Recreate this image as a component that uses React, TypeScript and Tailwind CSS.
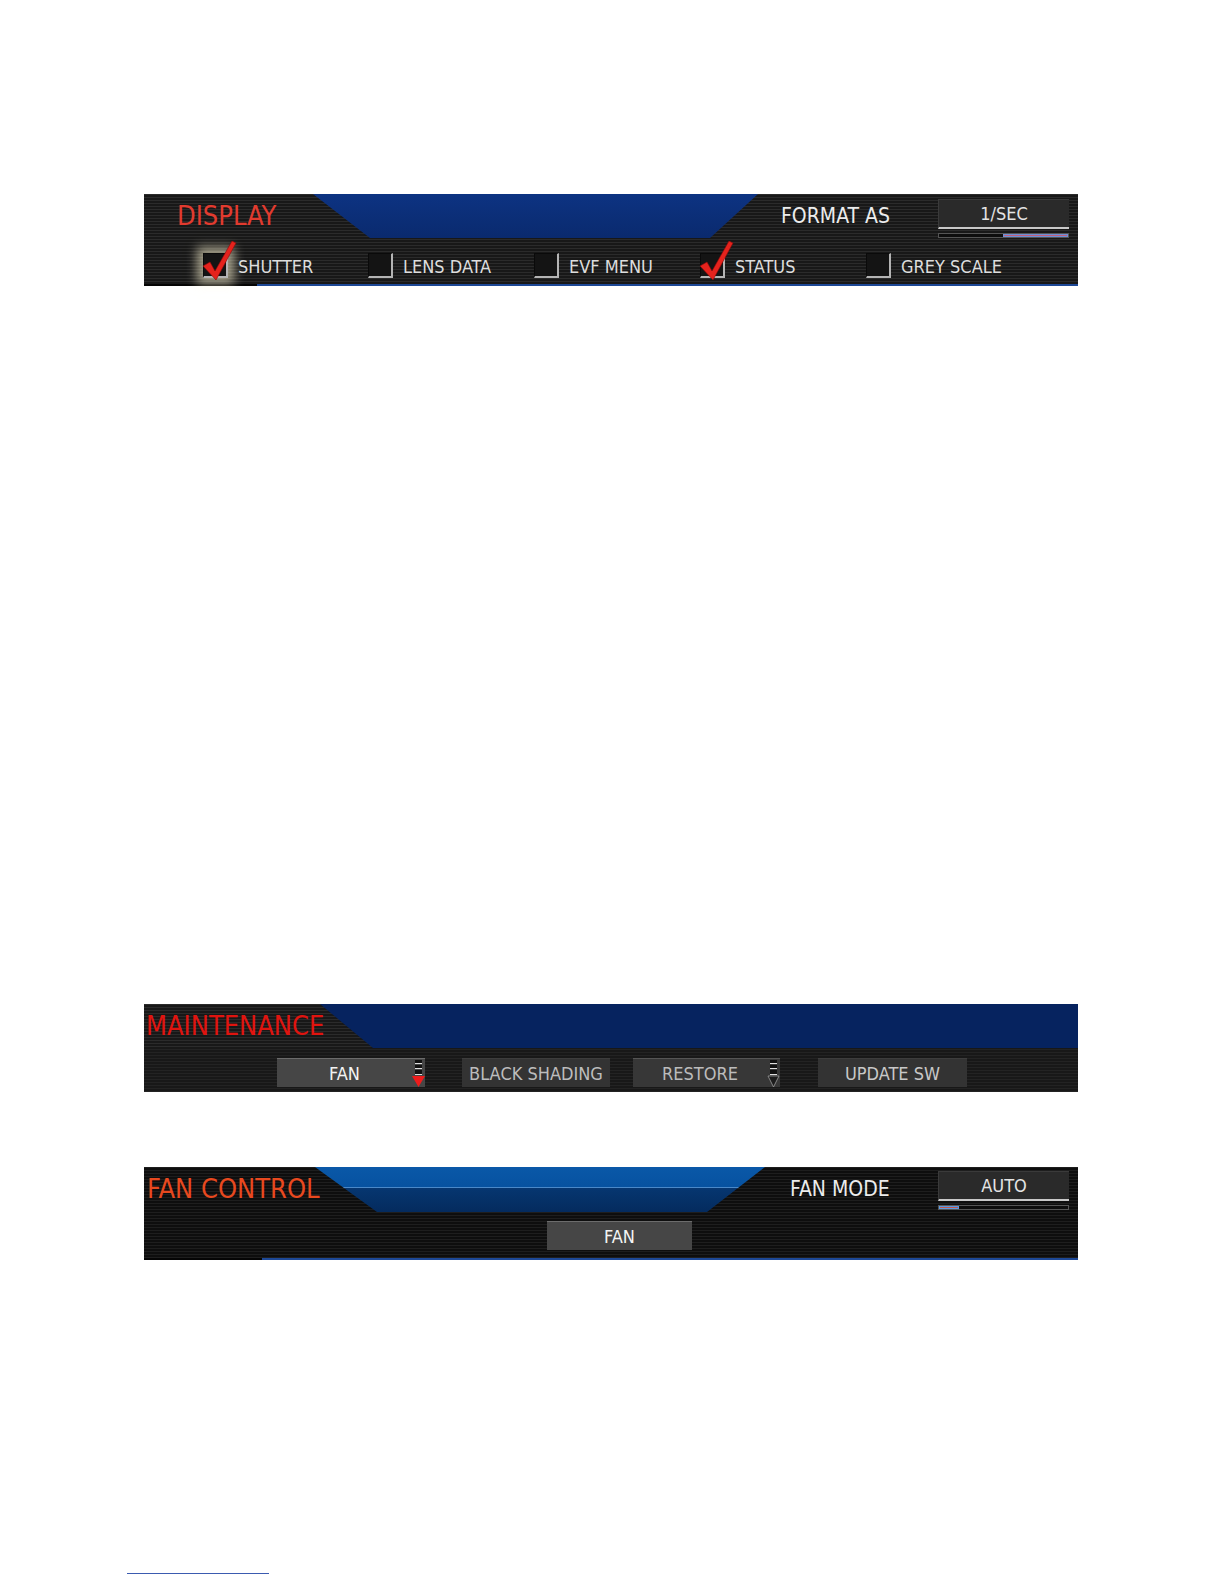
import React from 'react';

const font = 'font-["DejaVu_Sans_Condensed","DejaVu_Sans",sans-serif]';
const stripes = 'bg-[repeating-linear-gradient(180deg,#2b2b2b_0px,#2b2b2b_1px,#181818_1px,#181818_3px)]';
const darkStripes = 'bg-[repeating-linear-gradient(180deg,#1e1e1e_0px,#1e1e1e_1px,#0e0e0e_1px,#0e0e0e_3px)]';

const CheckMark = () => (
    <svg className="absolute -left-[3px] -top-[13px] w-[36px] h-[40px]" viewBox="0 0 36 40">
        <path d="M2 25 L9 21 L14 30 L31 0 L35 2 L15 39 Z" fill="#e5231d" stroke="#8c0a0a" strokeWidth="0.6" />
    </svg>
);

const CheckItem = ({ label, checked, glow }: { label: string; checked?: boolean; glow?: boolean }) => (
    <div className="flex items-center gap-[10px]">
        <div
            className={`relative w-[25px] h-[25px] bg-[#141414] border-t border-l border-[#0a0a0a] border-r-2 border-b-2 border-r-[#b4b4b4] border-b-[#b4b4b4] ${
                glow ? 'shadow-[0_0_10px_6px_rgba(255,246,210,0.6)]' : ''
            }`}
        >
            {checked && <CheckMark />}
        </div>
        <span className="text-[18px] text-[#dedede] leading-none pt-[2px]">{label}</span>
    </div>
);

const ValueBox = ({ value, segment }: { value: string; segment: 'right' | 'left' }) => (
    <div className="flex flex-col">
        <div className="h-[30px] flex items-center justify-center bg-[#2a2a2a] border-t border-l border-[#3a3a3a] border-b-2 border-b-[#c8c8c8] text-[18px] text-[#e4e4e4]">
            {value}
        </div>
        <div className="mt-[4px] h-[5px] flex border border-[#555] bg-[#0d0d0d]">
            {segment === 'right' ? (
                <div className="ml-[64px] flex-1 bg-[#c2607c] border border-[#6f8fd6]" />
            ) : (
                <div className="w-[20px] bg-[#c4584e] border border-[#5b9ae0]" />
            )}
        </div>
    </div>
);

const Indicator = ({ red }: { red?: boolean }) => (
    <svg className="w-[13px] h-[29px] shrink-0" viewBox="0 0 13 29">
        <rect x="3" y="1" width="7" height="3" fill="#111" />
        <rect x="3" y="4" width="7" height="1" fill="#ddd" />
        <rect x="3" y="6" width="7" height="3" fill="#111" />
        <rect x="3" y="9" width="7" height="1" fill="#ddd" />
        <rect x="3" y="11" width="7" height="4" fill="#111" />
        <rect x="3" y="15" width="7" height="1" fill="#ddd" />
        {red ? (
            <polygon points="0,17 13,17 6.5,28" fill="#ee1c1c" />
        ) : (
            <polygon points="1,17 12,17 6.5,28" fill="#1c1c1c" stroke="#9a9a9a" strokeWidth="0.8" />
        )}
    </svg>
);

const App = () => {
    return (
        <div className={`w-[1224px] h-[1584px] bg-white flex flex-col ${font}`}>
            {/* DISPLAY */}
            <div className={`ml-[144px] mt-[194px] w-[934px] flex flex-col ${stripes}`}>
                <div className="flex h-[44px]">
                    <div className="w-[169px] pl-[33px] flex items-center text-[27px] text-[#e23b2f]">DISPLAY</div>
                    <div className="w-[445px] bg-[linear-gradient(180deg,#0d3382,#0a2a6e)] [clip-path:polygon(0_0,100%_0,calc(100%_-_48px)_100%,57px_100%)]" />
                    <div className="flex-1 flex items-start">
                        <span className="ml-[23px] mt-[7px] text-[21px] text-[#ececec]">FORMAT AS</span>
                        <div className="ml-auto mr-[9px] mt-[5px] w-[131px]">
                            <ValueBox value="1/SEC" segment="right" />
                        </div>
                    </div>
                </div>
                <div className="h-[46px] pt-[9px] pl-[59px] grid grid-cols-[165px_166px_166px_166px_165px] items-center">
                    <CheckItem label="SHUTTER" checked glow />
                    <CheckItem label="LENS DATA" />
                    <CheckItem label="EVF MENU" />
                    <CheckItem label="STATUS" checked />
                    <CheckItem label="GREY SCALE" />
                </div>
                <div className="flex h-[2px]">
                    <div className="w-[113px] bg-[#050505]" />
                    <div className="flex-1 bg-[#1d4896]" />
                </div>
            </div>

            {/* MAINTENANCE */}
            <div className={`ml-[144px] mt-[718px] w-[934px] flex flex-col ${stripes}`}>
                <div className="flex h-[44px]">
                    <div className="w-[176px] pl-[2px] flex items-center text-[27px] text-[#e0140f] whitespace-nowrap">MAINTENANCE</div>
                    <div className="flex-1 bg-[#06235f] [clip-path:polygon(0_0,100%_0,100%_100%,53px_100%)]" />
                </div>
                <div className="h-[44px] pt-[10px] flex items-start bg-[#1a1a1a]/40">
                    <div className="ml-[133px] w-[148px] h-[29px] flex items-center bg-[#464646] border-t border-[#6c6c6c]">
                        <span className="flex-1 text-center text-[18px] text-[#f4f4f4]">FAN</span>
                        <Indicator red />
                    </div>
                    <div className="ml-[37px] w-[148px] h-[29px] flex items-center justify-center bg-[#333] border-t border-[#3d3d3d] text-[18px] text-[#bdbdbd]">
                        BLACK SHADING
                    </div>
                    <div className="ml-[23px] w-[147px] h-[29px] flex items-center bg-[#373737] border-t border-[#555]">
                        <span className="flex-1 text-center text-[18px] text-[#bcbcbc]">RESTORE</span>
                        <Indicator />
                    </div>
                    <div className="ml-[38px] w-[149px] h-[29px] flex items-center justify-center bg-[#333] border-t border-[#3d3d3d] text-[18px] text-[#c8c8c8]">
                        UPDATE SW
                    </div>
                </div>
            </div>

            {/* FAN CONTROL */}
            <div className={`ml-[144px] mt-[75px] w-[934px] flex flex-col ${darkStripes}`}>
                <div className="flex h-[45px]">
                    <div className="w-[171px] pl-[3px] flex items-center text-[27px] text-[#e8491f] whitespace-nowrap">FAN CONTROL</div>
                    <div className="w-[450px] bg-[linear-gradient(180deg,#0a58a8_0%,#0752a0_44%,#4a88c8_44%,#4a88c8_47%,#063670_47%,#042b5e_100%)] [clip-path:polygon(0_0,100%_0,calc(100%_-_58px)_100%,62px_100%)]" />
                    <div className="flex-1 flex items-start">
                        <span className="ml-[25px] mt-[7px] text-[21px] text-[#ececec]">FAN MODE</span>
                        <div className="ml-auto mr-[9px] mt-[4px] w-[131px]">
                            <ValueBox value="AUTO" segment="left" />
                        </div>
                    </div>
                </div>
                <div className="h-[46px] pt-[9px] flex items-start">
                    <div className="ml-[403px] w-[145px] h-[29px] flex items-center justify-center bg-[#464646] border-t border-[#6c6c6c] text-[18px] text-[#f4f4f4]">
                        FAN
                    </div>
                </div>
                <div className="flex h-[2px]">
                    <div className="w-[118px] bg-[#050505]" />
                    <div className="flex-1 bg-[#1d4896]" />
                </div>
            </div>

            {/* footnote rule */}
            <div className="ml-[127px] mt-[313px] w-[142px] h-px bg-[#3b5bb0]" />
        </div>
    );
};

export default App;
